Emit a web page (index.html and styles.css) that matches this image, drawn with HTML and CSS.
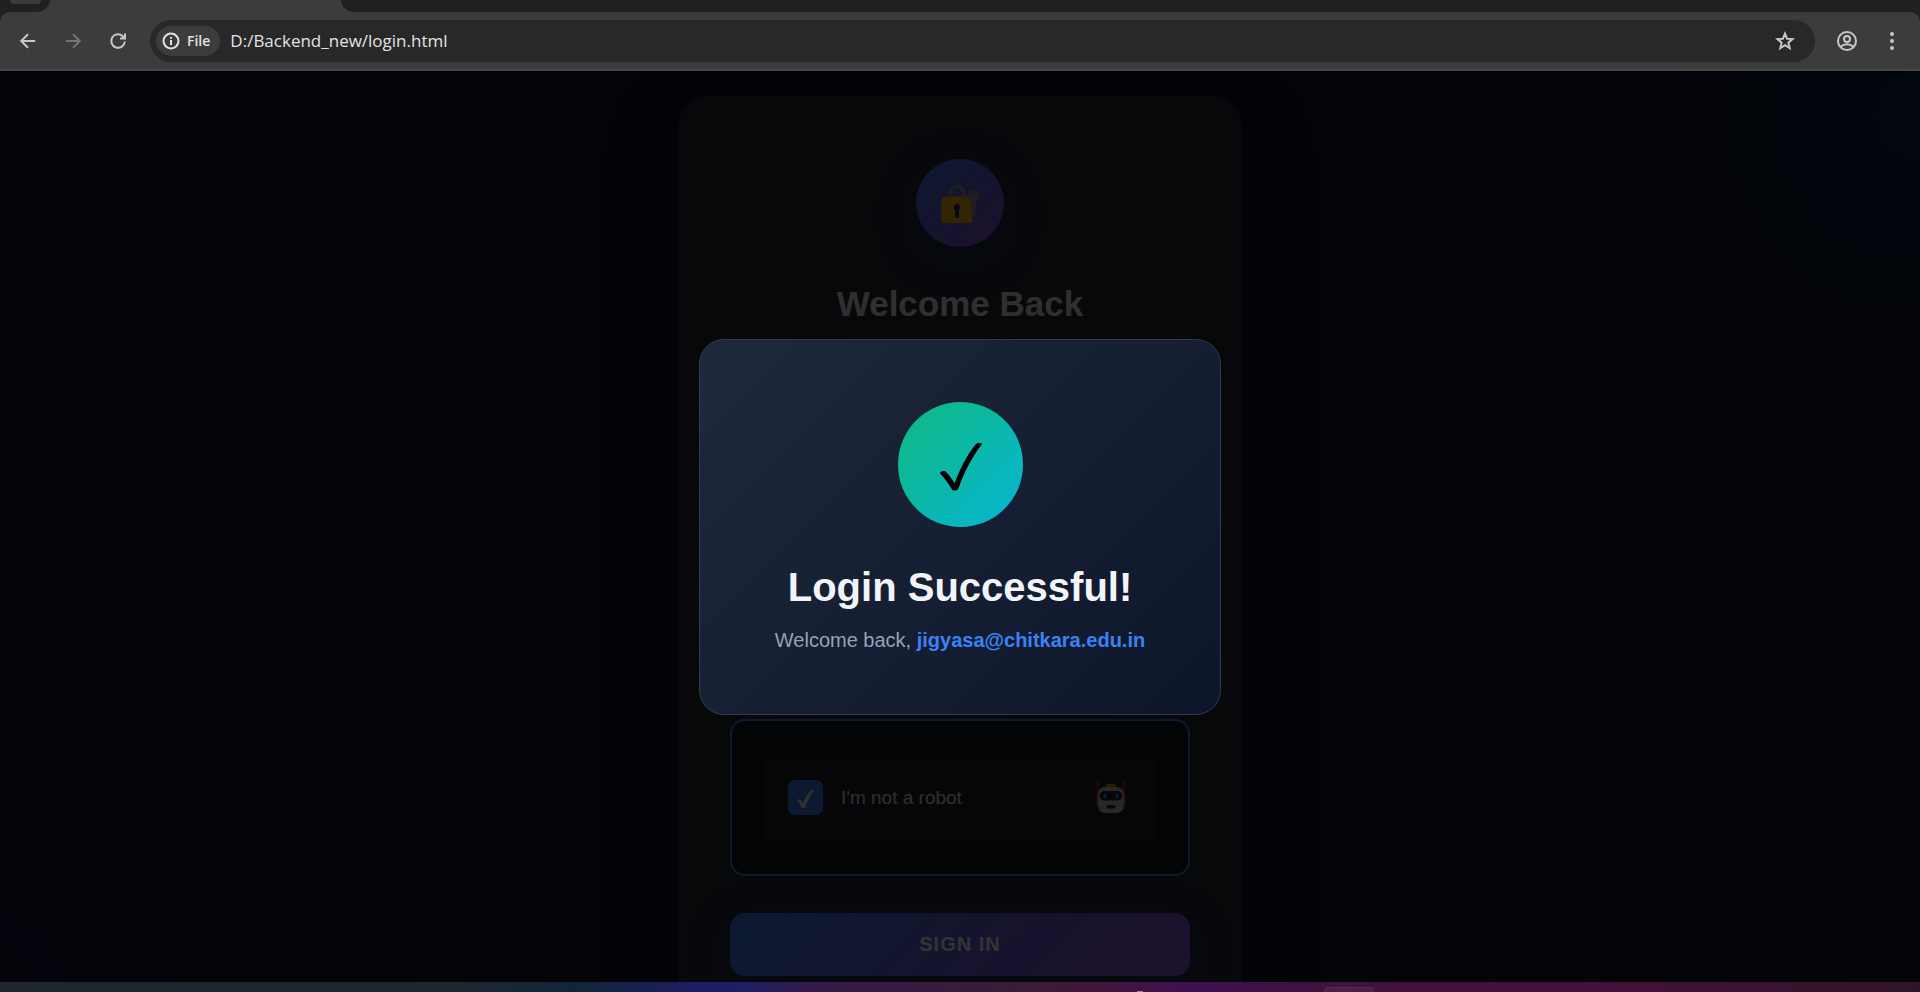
FILE: index.html
```html
<!DOCTYPE html>
<html lang="en">
<head>
<meta charset="utf-8">
<title>Login</title>
<link rel="stylesheet" href="styles.css">
</head>
<body>
<header class="browser">
  <div class="tabs">
    <div class="tab-rest"><span class="tab-pill"></span></div>
    <div class="tab-active"></div>
    <div class="tab-empty"></div>
  </div>
  <div class="toolbar">
    <nav class="nav">
      <button class="icon-btn" aria-label="Back"><svg width="20" height="20" viewBox="0 0 20 20"><path d="M17.2 10H3.6M10 3.2L3.2 10l6.8 6.8"/></svg></button>
      <button class="icon-btn dim" aria-label="Forward"><svg width="20" height="20" viewBox="0 0 20 20"><path d="M2.800 10h13.600M10 3.200L16.800 10 10 16.800"/></svg></button>
      <button class="icon-btn" aria-label="Reload"><svg width="20" height="20" viewBox="0 0 20 20"><path d="M16.800 10.500a6.800 6.800 0 1 1-2-5.300L16.800 7.200M17 2.500v5h-5"/></svg></button>
    </nav>
    <div class="omnibox">
      <button class="chip"><svg width="18" height="18" viewBox="0 0 18 18"><circle cx="9" cy="9" r="7.500"/><path d="M9 8v5M9 5v1.800"/></svg><span>File</span></button>
      <input class="url" type="text" aria-label="Address" value="D:/Backend_new/login.html">
      <button class="icon-btn" aria-label="Bookmark"><svg width="20" height="20" viewBox="0 0 20 20"><path d="M10 2.600l2.100 5.100 5.500.4-4.200 3.600 1.300 5.400-4.700-2.900-4.700 2.900 1.300-5.400L2.400 8.100l5.500-.4z"/></svg></button>
    </div>
    <div class="tools">
      <button class="icon-btn" aria-label="Profile"><svg width="22" height="22" viewBox="0 0 22 22"><circle cx="11" cy="11" r="9"/><circle cx="11" cy="9" r="3"/><path d="M4.600 16.800c3.400-3.300 9.400-3.300 12.800 0"/></svg></button>
      <button class="icon-btn" aria-label="Menu"><svg width="20" height="20" viewBox="0 0 20 20"><g class="solid"><circle cx="10" cy="3" r="2"/><circle cx="10" cy="10" r="2"/><circle cx="10" cy="17" r="2"/></g></svg></button>
    </div>
  </div>
</header>

<main class="page">
  <form class="card">
    <div class="logo">
      <svg width="40" height="40" viewBox="0 0 40 40" aria-hidden="true">
        <path d="M10.500 16v-6a6.500 6.500 0 0 1 13 0v6" fill="none" stroke="#9b9b9b" stroke-width="3.600"/>
        <rect x="1.500" y="13.500" width="31" height="27" rx="4" fill="#fdb414"/>
        <path d="M17 21a3.500 3.500 0 0 1 2 6.300V33a2 2 0 0 1-4 0v-5.700A3.500 3.500 0 0 1 17 21z" fill="#2d2a50"/>
        <path fill-rule="evenodd" d="M33.300 6.800a6.300 6.300 0 0 1 2.200 12.100V32l-2.200 2-2.200-2.300 1.200-1.700-1.200-1.700V18.900A6.300 6.300 0 0 1 33.300 6.800zm0 1.800a1.500 1.500 0 1 0 0 3 1.500 1.500 0 0 0 0-3z" fill="#99958f"/>
      </svg>
    </div>
    <h1 class="title">Welcome Back</h1>
    <div class="captcha">
      <label class="captcha-row">
        <input class="tick" type="checkbox" checked>
        <svg class="tick-mark" width="35" height="35" viewBox="0 0 35 35" aria-hidden="true"><path d="M9 20.500c1.600-1.600 3-1.400 4 0l2 2.800C17 18 20 13.500 23 10h3c-3.800 5-6.400 11.200-8.800 17.400q-2 1.300-3.600 0C12.400 24.600 11 22.200 9 20.500z" fill="#f1f1ee"/></svg>
        <span class="tick-label">I'm not a robot</span>
        <svg class="robot" width="30" height="32" viewBox="0 0 30 32" aria-hidden="true">
          <g fill="#d0202a"><circle cx="1.800" cy="2" r="1.700"/><circle cx="28.200" cy="2" r="1.700"/><rect x="1.200" y="2" width="1.200" height="12"/><rect x="27.600" y="2" width="1.200" height="12"/><rect x="0" y="12" width="4" height="12" rx="2"/><rect x="26" y="12" width="4" height="12" rx="2"/></g>
          <rect x="10" y="2" width="10" height="6" rx="2" fill="#e0950f"/>
          <rect x="2" y="5" width="26" height="26" rx="7" fill="#c4c0c6"/>
          <rect x="3.500" y="9" width="23" height="9.500" rx="4.700" fill="#26222c"/>
          <ellipse cx="9" cy="14" rx="1.600" ry="2.500" fill="#00a6ed"/><ellipse cx="21" cy="14" rx="1.600" ry="2.500" fill="#00a6ed"/>
          <rect x="10.500" y="23" width="9" height="3.600" rx="1.800" fill="#26222c"/>
        </svg>
      </label>
    </div>
    <button class="submit" type="button">SIGN IN</button>
  </form>

  <div class="overlay">
    <section class="modal" role="dialog" aria-labelledby="modal-title">
      <div class="badge"><svg width="125" height="125" viewBox="0 0 125 125" aria-hidden="true"><path d="M42 71.500C41.600 69.800 45.400 68.200 47.500 69.300C51.300 73 54.300 77.500 56.600 81.300C61.500 68.500 67.500 55 77.500 42.500C79.500 40.500 83.500 40.800 84.200 42C74 54.600 66.500 69.500 60.200 87C59 89 55 89 54 87.500C50.500 81.600 46.500 76 42 71.500z"/></svg></div>
      <h2 class="modal-title" id="modal-title">Login Successful!</h2>
      <p class="modal-text">Welcome back, <strong>jigyasa@chitkara.edu.in</strong></p>
    </section>
  </div>
</main>

<footer class="taskbar"><span class="task-dot"></span><span class="task-item"></span></footer>
</body>
</html>
```
FILE: styles.css
```css
* { box-sizing: border-box; }
body {
  margin: 0;
  height: 100vh;
  display: flex;
  flex-direction: column;
  overflow: hidden;
  background: #000;
  font-family: "Liberation Sans", Arial, sans-serif;
}
button, input { font: inherit; border: 0; padding: 0; margin: 0; background: none; color: inherit; }

.browser { flex: none; background: #1f2120; }
.tabs { display: flex; height: 12px; background: #3c3c3c; }
.tab-rest { width: 50px; padding-left: 10px; background: #1f2120; border-bottom-right-radius: 14px 12px; }
.tab-pill { display: block; width: 31px; height: 4px; background: #3c3c3c; border-radius: 0 0 10px 10px; }
.tab-active { width: 291px; }
.tab-empty { flex: 1; background: #1f2120; border-bottom-left-radius: 14px 12px; }
.toolbar {
  display: flex;
  align-items: center;
  height: 59px;
  padding: 0 17px 0 18px;
  background: #3c3c3c;
  border-bottom: 2px solid #474747;
  border-radius: 10px 10px 0 0;
}
.nav { display: flex; gap: 25px; width: 132px; }
.icon-btn { display: flex; }
.icon-btn svg, .chip svg { fill: none; stroke: #c7c7c7; stroke-width: 2; }
.icon-btn .solid { fill: #c7c7c7; stroke: none; }
.dim svg { stroke: #757575; }
.omnibox {
  flex: 1;
  display: flex;
  align-items: center;
  height: 42px;
  padding: 0 20px 0 6px;
  border-radius: 21px;
  background: #282828;
}
.chip {
  display: flex;
  align-items: center;
  gap: 7px;
  height: 30px;
  padding: 0 10px 0 6px;
  border-radius: 15px;
  background: #3c3c3c;
  color: #e3e3e3;
  font: 600 14px "Open Sans", "Noto Sans", sans-serif;
}
.chip svg { stroke: #e3e3e3; }
.url { flex: 1; min-width: 0; padding-left: 10px; color: #e3e3e3; font: 17px "Open Sans", "Noto Sans", sans-serif; }
.tools { display: flex; align-items: center; gap: 24px; padding: 0 1px 0 21px; }

.page {
  flex: 1;
  min-height: 0;
  position: relative;
  overflow: hidden;
  display: flex;
  flex-direction: column;
  align-items: center;
  padding-top: 25px;
  background:
    radial-gradient(circle at 100% 5%, rgba(10, 50, 110, .4), transparent 300px),
    radial-gradient(circle at 0% 100%, rgba(60, 10, 90, .4), transparent 220px),
    #0e1428;
}
.card {
  flex: none;
  display: flex;
  flex-direction: column;
  align-items: center;
  width: 100%;
  max-width: 562px;
  padding: 62px 50px;
  border: 1px solid #323640;
  border-radius: 30px;
  background: #222834;
  box-shadow: 0 31px 62px rgba(0, 0, 0, .5);
}
.logo {
  display: flex;
  align-items: center;
  justify-content: center;
  width: 88px;
  height: 88px;
  border-radius: 50%;
  background: linear-gradient(135deg, #3b82f6, #6660e0 50%, #9254d8);
  box-shadow: 0 12px 38px rgba(0, 60, 140, .3);
}
.title { margin: 37px 0 0; font-size: 35px; line-height: 40px; color: #ececee; }
.captcha {
  align-self: stretch;
  margin-top: 395px;
  padding: 32px 31px;
  border: 2px solid #3b82f6;
  border-radius: 15px;
  background: #10141e;
}
.captcha-row {
  display: flex;
  align-items: center;
  position: relative;
  height: 89px;
  padding: 0 31px 0 25px;
  border-radius: 10px;
  background: #1e222c;
}
.tick { appearance: none; width: 35px; height: 35px; border-radius: 7px; background: #3b82f6; }
.tick-mark { position: absolute; left: 25px; }
.tick-label { flex: 1; padding-left: 18px; font-size: 19px; line-height: 24px; color: #e4e4e8; }
.submit {
  align-self: stretch;
  height: 63px;
  margin-top: 37px;
  border-radius: 15px;
  background: linear-gradient(135deg, #3b82f6, #6660e0 50%, #9254d8);
  box-shadow: 0 12px 38px rgba(0, 60, 140, .3);
  color: #ffffff;
  font-size: 20px;
  font-weight: 700;
  letter-spacing: 1px;
}

.overlay {
  position: absolute;
  inset: 0;
  display: flex;
  align-items: center;
  justify-content: center;
  background: rgba(0, 0, 0, .8);
}
.modal {
  display: flex;
  flex-direction: column;
  align-items: center;
  width: 100%;
  max-width: 522px;
  padding: 62px 20px;
  border: 1px solid #303b4d;
  border-radius: 25px;
  background: linear-gradient(135deg, #1e293b, #0d152a);
}
.badge { width: 125px; height: 125px; border-radius: 50%; background: linear-gradient(135deg, #10b981, #06b6d4); }
.modal-title { margin: 37px 0 18px; font-size: 40px; line-height: 46px; color: #f1f5f9; }
.modal-text { margin: 0; font-size: 20px; line-height: 24px; color: #94a3b8; }
.modal-text strong { color: #3b82f6; }

.taskbar {
  flex: none;
  display: flex;
  align-items: flex-end;
  justify-content: flex-end;
  gap: 181px;
  height: 10px;
  padding-right: 546px;
  background: linear-gradient(90deg, #1c262c, #1a2830 24%, #122538 30%, #1a1e60 36%, #1f1e62 39%, #351a45 43%, #3a1c38 54%, #45143c 57%, #3f1050 62%, #40123c 70%, #45103a 83%, #301528);
}
.task-dot { width: 6px; height: 1px; background: #a08080; }
.task-item { width: 50px; height: 5px; border: 1px solid #5a2d56; border-bottom: 0; border-radius: 5px 5px 0 0; background: #4b1f48; }
```
